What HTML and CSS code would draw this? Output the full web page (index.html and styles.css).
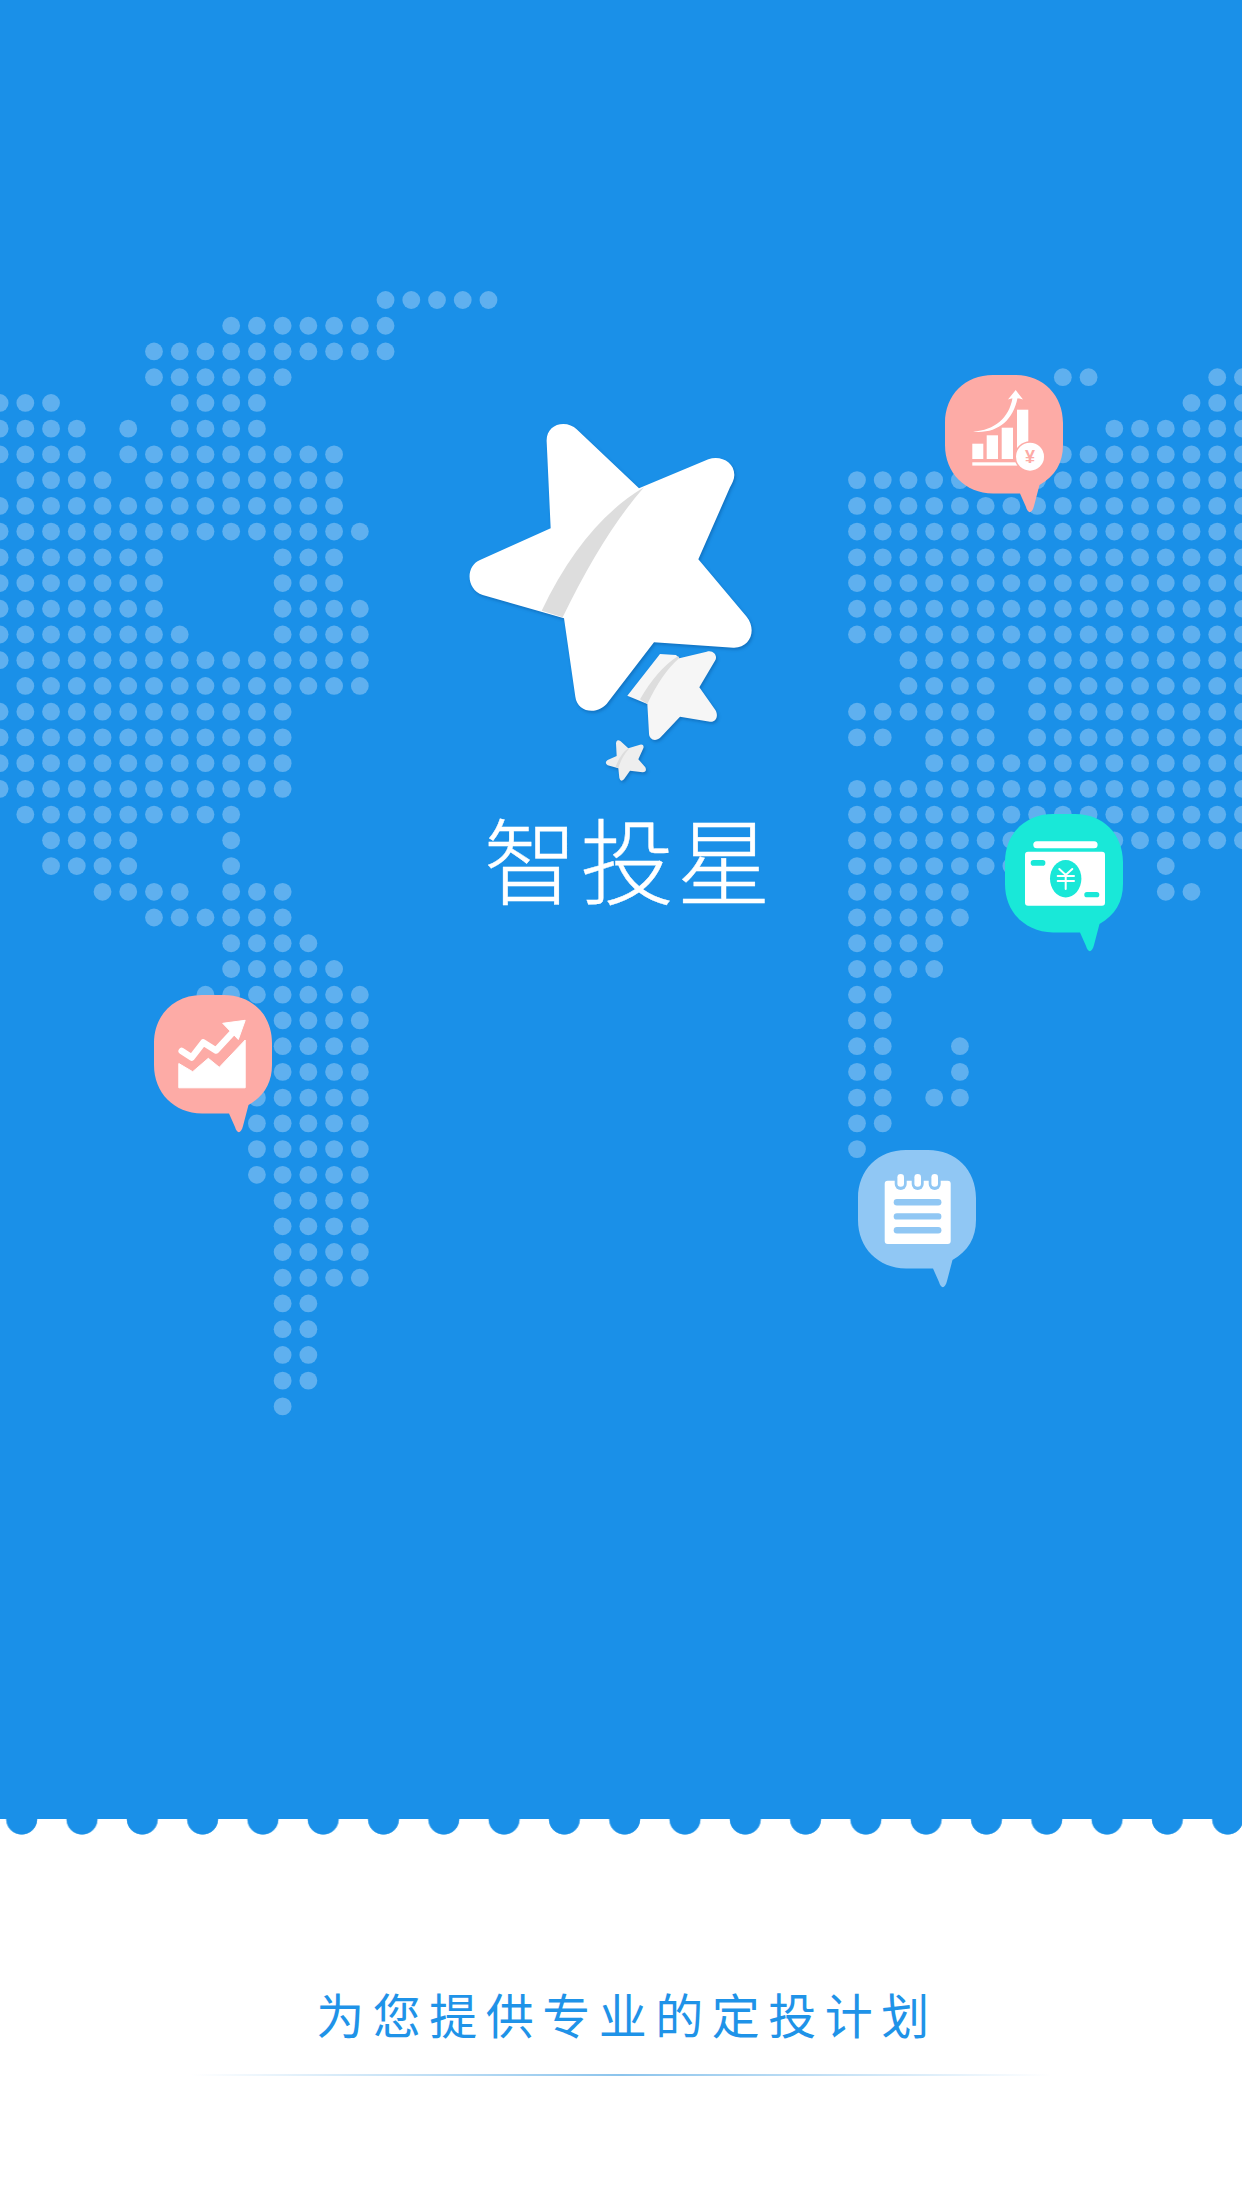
FILE: index.html
```html
<!DOCTYPE html>
<html lang="zh-CN">
<head>
  <meta charset="UTF-8">
  <meta name="viewport" content="width=device-width, initial-scale=1.0">
  <title>智投星</title>
  <link rel="stylesheet" href="styles.css">
</head>
<body>
<div class="screen">
  <div class="hero">
    <svg class="map" id="map" viewBox="0 0 1242 1819"></svg>

    <svg class="logo" viewBox="0 0 1080 1206">
      <path class="star-big" d="M320 125 C318 92 342 72 370 72 C385 72 400 78 410 88 L597 265 L805 178 C840 165 883 185 883 225 C883 240 875 252 870 262 L775 478 L920 650 C952 690 930 745 880 743 L642 727 L505 905 C475 948 412 938 406 890 L372 655 L128 585 C78 568 76 498 120 480 L332 385 Z"/>
      <path class="fold" d="M612 262 Q430 370 305 632 L368 652 Q490 400 612 262 Z"/>
      <path class="star-mid" d="M660 762 L708 765 L718 775 L800 755 C820 748 835 768 825 782 L778 862 L826 930 C838 950 825 968 810 965 L720 950 L662 1012 C645 1028 627 1018 627 1000 L622 912 L562 887 Z"/>
      <path class="fold" d="M714 768 Q650 810 600 898 L622 912 Q665 820 718 774 Z"/>
      <path class="star-small" d="M528 1030 Q530 1015 542 1024 L565 1045 L600 1034 Q614 1032 610 1045 L595 1078 L616 1102 Q622 1116 608 1117 L570 1112 L552 1138 Q542 1148 538 1134 L535 1105 L503 1096 Q492 1088 503 1080 L530 1068 Z"/>
      <path class="fold" d="M565 1045 Q542 1060 527 1100 L535 1105 Q545 1070 567 1046 Z"/>
    </svg>

    <h1 class="title">智投星</h1>

    <!-- chart with yen coin -->
    <svg class="pin pin-chart" viewBox="0 0 118 140">
      <path class="bubble pink" d="M48 0 H70 C98 0 118 20 118 48 V70 C118 88 110 101 94.5 110 L89 131 C87 139 83 139 81 132 L75 118.5 H48 C20 118 0 98 0 70 V48 C0 20 20 0 48 0 Z"/>
      <rect class="ink" x="27.3" y="68.7" width="11" height="15.3"/>
      <rect class="ink" x="41.7" y="60.3" width="11.3" height="23.7"/>
      <rect class="ink" x="56.7" y="52.7" width="11.3" height="31.3"/>
      <rect class="ink" x="72" y="34.7" width="11.3" height="50"/>
      <rect class="ink" x="27.3" y="87.3" width="46" height="3.3"/>
      <path class="ink" d="M28 56.7 C50 55 64 43 67.5 23 H72.5 C68 46 52 59 28 56.7 Z"/>
      <path class="ink" d="M70.7 15 L78 24.5 Q70 22 63 24.5 Z"/>
      <circle class="cut-pink" cx="85" cy="81.7" r="15.5"/>
      <circle class="ink" cx="85" cy="81.7" r="14"/>
      <text class="yen" x="85" y="88">¥</text>
    </svg>

    <!-- banknote -->
    <svg class="pin pin-money" viewBox="0 0 118 140">
      <path class="bubble teal" d="M48 0 H70 C98 0 118 20 118 48 V70 C118 88 110 101 94.5 110 L89 131 C87 139 83 139 81 132 L75 118.5 H48 C20 118 0 98 0 70 V48 C0 20 20 0 48 0 Z"/>
      <rect class="ink" x="28.3" y="27.3" width="64.3" height="7" rx="3.5"/>
      <rect class="ink" x="20" y="37.7" width="80" height="54" rx="3"/>
      <rect class="cut-teal" x="25.7" y="46" width="14.7" height="5.7" rx="2.8"/>
      <rect class="cut-teal" x="79.3" y="78" width="15" height="5.3" rx="2.6"/>
      <ellipse class="cut-teal" cx="60.7" cy="64.7" rx="15.7" ry="18.7"/>
      <path class="yen-line" d="M54.3 55 L60.7 61 L67.3 55 M52.7 62 H69 M52.7 67 H69 M60.7 61 V75"/>
    </svg>

    <!-- trend line -->
    <svg class="pin pin-trend" viewBox="0 0 118 140">
      <path class="bubble pink" d="M48 0 H70 C98 0 118 20 118 48 V70 C118 88 110 101 94.5 110 L89 131 C87 139 83 139 81 132 L75 118.5 H48 C20 118 0 98 0 70 V48 C0 20 20 0 48 0 Z"/>
      <path class="ink area" d="M24.8 68.5 L38.7 76.7 L54.3 63.3 L65.3 72.3 L91.2 45 V92.8 H24.8 Z"/>
      <path class="zigzag" d="M27.7 56 L37.7 62.5 L49.3 47.5 L62 55.5 L81 35"/>
      <path class="ink area" d="M68.7 28.3 L91.2 25.3 L84.3 44.5 Z"/>
    </svg>

    <!-- notepad -->
    <svg class="pin pin-note" viewBox="0 0 118 140">
      <path class="bubble sky" d="M48 0 H70 C98 0 118 20 118 48 V70 C118 88 110 101 94.5 110 L89 131 C87 139 83 139 81 132 L75 118.5 H48 C20 118 0 98 0 70 V48 C0 20 20 0 48 0 Z"/>
      <rect class="ink" x="26.7" y="30.7" width="66" height="63.3" rx="3"/>
      <rect class="cut-sky" x="36.7" y="24" width="12" height="16" rx="6"/>
      <rect class="cut-sky" x="53.7" y="24" width="12" height="16" rx="6"/>
      <rect class="cut-sky" x="70.7" y="24" width="12" height="16" rx="6"/>
      <rect class="ink" x="39.4" y="24" width="6.6" height="12.7" rx="3.3"/>
      <rect class="ink" x="56.4" y="24" width="6.6" height="12.7" rx="3.3"/>
      <rect class="ink" x="73.4" y="24" width="6.6" height="12.7" rx="3.3"/>
      <rect class="cut-sky" x="35.7" y="49" width="47.7" height="6.4" rx="3.2"/>
      <rect class="cut-sky" x="35.7" y="63.2" width="47.7" height="6.4" rx="3.2"/>
      <rect class="cut-sky" x="35.7" y="77" width="47.7" height="6.4" rx="3.2"/>
    </svg>
  </div>

  <div class="scallop"></div>

  <div class="footer">
    <p class="slogan">为您提供专业的定投计划</p>
    <div class="divider"></div>
  </div>
</div>
<script src="map.js"></script>
</body>
</html>
```

FILE: styles.css
```css
* {
  margin: 0;
  padding: 0;
  box-sizing: border-box;
}

body {
  background: #fff;
  font-family: "Noto Sans CJK SC", "Noto Sans", sans-serif;
}

.screen {
  width: 1242px;
  height: 2208px;
  overflow: hidden;
  display: flex;
  flex-direction: column;
}

/* Blue area with the dotted world map */
.hero {
  position: relative;
  height: 1819px;
  padding-top: 400px;
  display: flex;
  flex-direction: column;
  align-items: center;
  background: #1a90e8;
}

.map {
  position: absolute;
  left: 0;
  top: 0;
  width: 1242px;
  height: 1819px;
}

.map circle {
  fill: #5fb0ef;
}

.logo {
  position: relative;
  width: 360px;
  height: 402px;
  margin-right: 2px;
  flex-shrink: 0;
}

.star-big {
  fill: #fff;
  filter: drop-shadow(4px 6px 5px rgba(0, 50, 110, 0.3));
}

.star-mid {
  fill: #f6f6f6;
  filter: drop-shadow(4px 6px 5px rgba(0, 50, 110, 0.3));
}

.star-small {
  fill: #eeeeee;
  filter: drop-shadow(4px 6px 5px rgba(0, 50, 110, 0.3));
}

.fold {
  fill: #dddddd;
}

.title {
  position: relative;
  margin-left: 15px;
  font-size: 94px;
  line-height: 110px;
  font-weight: 300;
  letter-spacing: 2.5px;
  color: #fff;
  -webkit-text-stroke: 0.4px #fff;
}

/* Speech bubble pins */
.pin {
  position: absolute;
  width: 118px;
  height: 140px;
}

.pin-chart { left: 945px; top: 375px; }
.pin-money { left: 1005px; top: 814px; }
.pin-trend { left: 154px; top: 995px; }
.pin-note { left: 858px; top: 1150px; }

.pink, .cut-pink { fill: #fdaba6; }
.teal, .cut-teal { fill: #19e8d8; }
.sky, .cut-sky { fill: #90c7f4; }
.ink { fill: #fff; }

.yen {
  fill: #fdaba6;
  font-family: "Liberation Sans", sans-serif;
  font-size: 18px;
  font-weight: 700;
  text-anchor: middle;
}

.yen-line {
  fill: none;
  stroke: #fff;
  stroke-width: 2;
  stroke-linecap: round;
}

.area {
  stroke: #fff;
  stroke-width: 1;
  stroke-linejoin: round;
}

.zigzag {
  fill: none;
  stroke: #fff;
  stroke-width: 6.5;
  stroke-linecap: round;
  stroke-linejoin: round;
}

/* Row of half circles under the blue area */
.scallop {
  height: 16px;
  flex-shrink: 0;
  background: radial-gradient(circle at 50% 0, #1a90e8 14.8px, #4fabea 15.4px, transparent 16px);
  background-size: 60.3px 16px;
  background-position: -8.45px 0;
}

.footer {
  display: flex;
  flex-direction: column;
  align-items: center;
  padding-top: 146px;
}

.slogan {
  margin-left: 12px;
  font-size: 48px;
  line-height: 64px;
  font-weight: 400;
  letter-spacing: 8.5px;
  color: #1f93e8;
}

.divider {
  width: 860px;
  height: 2px;
  margin-top: 29px;
  background: linear-gradient(to right, rgba(140, 196, 236, 0), #8cc4ec 50%, rgba(140, 196, 236, 0));
}
```

FILE: map.js
```js
// Dot map: each row lists runs of [first, last] columns.
const PITCH = 25.73;
const TOP = 300;

const west = {
  0: [[15, 19]], 1: [[9, 15]], 2: [[6, 15]], 3: [[6, 11]],
  4: [[0, 2], [7, 10]], 5: [[0, 3], [5, 5], [7, 10]],
  6: [[0, 3], [5, 13]], 7: [[1, 4], [6, 13]],
  8: [[0, 13]], 9: [[0, 14]],
  10: [[0, 6], [11, 13]], 11: [[0, 6], [11, 13]],
  12: [[0, 6], [11, 14]], 13: [[0, 7], [11, 14]],
  14: [[0, 14]], 15: [[1, 14]],
  16: [[0, 11]], 17: [[0, 11]], 18: [[0, 11]], 19: [[0, 11]],
  20: [[1, 9]], 21: [[2, 5], [9, 9]], 22: [[2, 5], [9, 9]],
  23: [[4, 7], [9, 11]], 24: [[6, 11]], 25: [[9, 12]], 26: [[9, 13]],
  27: [[8, 14]], 28: [[10, 14]], 29: [[10, 14]], 30: [[10, 14]],
  31: [[10, 14]], 32: [[10, 14]], 33: [[10, 14]], 34: [[10, 14]],
  35: [[11, 14]], 36: [[11, 14]], 37: [[11, 14]], 38: [[11, 14]],
  39: [[11, 12]], 40: [[11, 12]], 41: [[11, 12]], 42: [[11, 12]],
  43: [[11, 11]]
};

const east = {
  3: [[8, 9], [14, 15]], 4: [[13, 15]], 5: [[10, 15]], 6: [[8, 15]],
  7: [[0, 15]], 8: [[0, 15]], 9: [[0, 15]], 10: [[0, 15]],
  11: [[0, 15]], 12: [[0, 15]], 13: [[0, 15]],
  14: [[2, 15]], 15: [[2, 5], [7, 15]], 16: [[0, 5], [7, 15]],
  17: [[0, 1], [3, 5], [7, 15]], 18: [[3, 15]],
  19: [[0, 15]], 20: [[0, 15]], 21: [[0, 15]],
  22: [[0, 6], [12, 12]], 23: [[0, 4], [12, 13]], 24: [[0, 4]],
  25: [[0, 3]], 26: [[0, 3]], 27: [[0, 1]], 28: [[0, 1]],
  29: [[0, 1], [4, 4]], 30: [[0, 1], [4, 4]], 31: [[0, 1], [3, 4]],
  32: [[0, 1]], 33: [[0, 0]]
};

const map = document.getElementById("map");

function drawDots(rows, left) {
  Object.keys(rows).forEach((row) => {
    rows[row].forEach(([first, last]) => {
      for (let col = first; col <= last; col++) {
        const dot = document.createElementNS("http://www.w3.org/2000/svg", "circle");
        dot.setAttribute("cx", left + col * PITCH);
        dot.setAttribute("cy", TOP + row * PITCH);
        dot.setAttribute("r", 8.9);
        map.appendChild(dot);
      }
    });
  });
}

drawDots(west, -0.4);
drawDots(east, 857);
```
